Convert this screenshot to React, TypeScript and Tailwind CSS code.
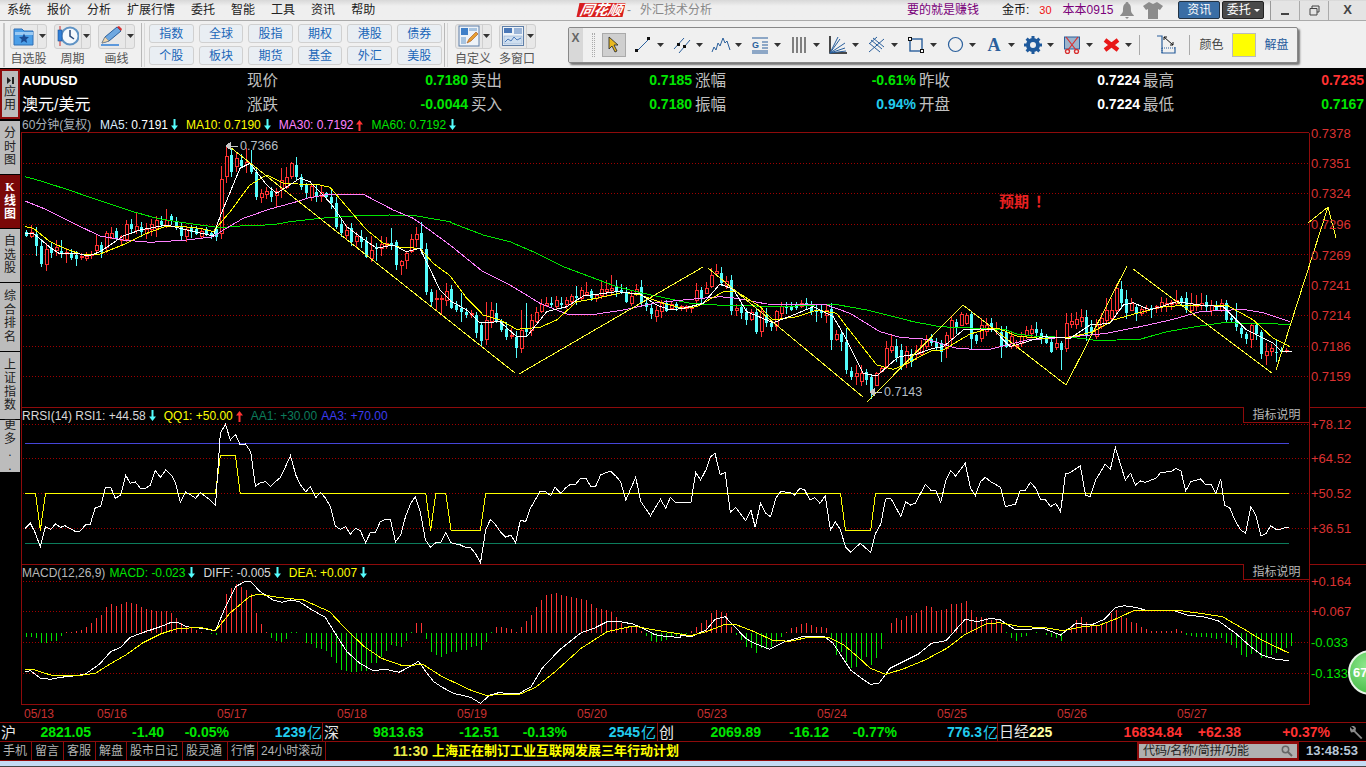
import type { ReactNode } from "react";

// chart data is traced off the screenshot, in 3x crop coordinates (y starts at 130 for the k-line pane)
const candleRows = `
c305,318 r308,318 c312,348,,378 c348,402 r358,402,,422 c355,370 r352,362,330 c362,370,330,385 r368,370,,400 c370,385
c376,386,,408 r380,383 r378,384 r372,376 r347,360,312,372 c345,367 r310,352 r310,325,292 c302,328,295 r320,332,,348
r283,328,270 c283,298,268 r290,300,250 c290,305,275 r297,310 r283,298 r270,296,258,320 c272,285 r270,285,238 c258,274,252
c272,288 c290,318 r298,320 c295,307 c297,312 r303,320 c297,312 c310,318 c298,320,285,332 r148,310,108,326
r78,140,47,158 c75,125 r85,108 c90,108 r98,104,55,130 c103,125,60 c125,200 r190,202,,218 r183,192,170 c183,200
r185,195,,230 r152,175,115,205 r142,172,110 r100,140,95 c105,140,82 c140,170,132 c165,190 r170,202,,212 c185,200 r188,198,165
c190,200,185 c200,220,,238 c218,290 c283,310 r300,315 c295,335 r320,335 c320,335,300 c332,380 r360,385,318,395
c350,358,340,392 r342,355,318,378 r340,345,322 c340,348,295 c335,405 r395,405,,435 r370,392,,418 r328,365,312 r312,328,,350 c310,358,275,372
c358,485 c485,515,478,530 r505,508,480,540 r505,508,495,552 r485,510,460 c478,535 c525,540 c535,545,488,575 c545,555 r550,553
c555,610 c585,632 r572,628,515 r540,575,515 c548,575,518 c572,600 c598,622 r615,618 c622,655,,683 r600,655,540
c598,605,520 r570,600 r548,575 r522,545 r520,525,502 c520,525,502 r510,528 c518,525,502 r512,522 r500,515
c498,505,468 r482,505,470 r488,492,456 c483,505 r495,505 r478,495 r478,485,450 r475,482,435 c468,482 c480,490
c487,515 r500,520 r478,490 c472,520,450 c520,530 c535,552 r540,560 r520,545 c518,542 r524,535
c522,535 r530,533 r530,535 r532,534 r480,510 c480,505,470 r475,490 r435,470,415 r425,430,402 c428,460
r455,465 c450,542 r535,542 c530,550,515 c545,570,,585 r548,568 c545,605 r545,605,,620 c555,580,535 c578,590
r545,590 r530,550,515 c530,535,515 c530,540,515 c525,535,515 r520,528,510 c520,527,505 c530,545 c540,545,,575 c540,550
r540,555,,580 c537,630,520,660 r612,628,600 c612,635,,662 c635,720,595,732 c722,740 r730,740,705,765 r730,755,705 c725,750 c742,790
r730,765 r715,725 r655,710 r650,660,612 c648,685
c660,708 r665,700 c675,695 r662,672 r645,672 r628,650 c628,640,612 c635,650 c640,665,,695 r615,655,,685
r570,625 c575,595 r552,585 r555,580 c552,628,,660 c615,632 r585,625 r585,605 c580,592,565 r595,598
c605,650,,685 c605,650 r620,650 r645,650 r620,640 r600,615 r598,610 c598,610,575 c608,625 c622,640
c635,665 r640,652,600 c640,660,,720 r580,655,548 r575,582,548 r568,582,545 r562,575,538 c560,615 c590,610 r585,620
r565,590,548 r540,570,505 r540,565,505 r475,540 c478,520,452 c508,548,480,568 r520,540,505 c532,550,,572 r538,550 r535,540,525
c533,538,,565 r530,535 r517,530,500 r520,528,505 r518,522,510 r510,520,480 c505,520,498 c505,540 r520,540,490 r525,530,495
r520,526,490 c515,530,495 r525,540 c525,540 r520,540,508 c520,570 c565,570,,575 c570,592,520 c595,612 c612,628
r585,628,,655 c585,612,578 c605,672,,688 r665,675,640,705 r655,665,642,678 c665,667,628,695 c662,665,650,672 r662,665,655,670`
  .trim()
  .split(/\s+/);

const candles = candleRows.map((row, i) => {
  const [top, bot, wt, wb] = row.slice(1).split(",").map((v) => (v === "" ? NaN : Number(v)));
  const wickTop = wt === undefined || Number.isNaN(wt) ? top - (4 + ((i * 37) % 19)) : wt;
  const wickBot = wb === undefined ? bot + (3 + ((i * 53) % 17)) : wb;
  return {
    x: Math.round(25.7 + 5 * i),
    up: row[0] === "r",
    top: 130 + top / 3,
    bot: 130 + bot / 3,
    wickTop: 130 + wickTop / 3,
    wickBot: 130 + wickBot / 3,
  };
});

const pts = (ox: number, sx: number, oy: number, arr: number[][]) =>
  arr.map(([x, y]) => `${(ox + x / sx).toFixed(1)},${(oy + y / 3).toFixed(1)}`).join(" ");
const main = (a: number[][], b: number[][], c: number[][]) =>
  `${pts(0, 3, 130, a)} ${pts(450, 3, 130, b)} ${pts(900, 3, 130, c)}`;

const ma60 = main(
  [[75,140],[120,152],[200,178],[300,212],[400,245],[470,265],[550,278],[660,293],[720,288],[820,284],[870,275],[960,265],[1060,258],[1170,255],[1250,258],[1350,275]],
  [[0,277],[100,315],[180,335],[260,370],[340,410],[420,440],[500,470],[580,490],[650,505],[720,520],[800,525],[1000,530],[1150,522],[1250,540],[1350,565]],
  [[0,565],[40,575],[120,590],[230,595],[320,600],[350,612],[400,618],[550,625],[590,632],[650,630],[720,628],[800,605],[900,588],[970,578],[1170,583]],
);
const ma30 = main(
  [[75,213],[130,235],[200,270],[300,318],[370,330],[450,337],[560,330],[640,320],[670,300],[730,265],[810,237],[890,215],[920,205],[985,193],[1090,193],[1180,240],[1240,265],[1350,345]],
  [[0,345],[95,422],[180,465],[270,520],[350,552],[440,552],[520,540],[620,518],[700,510],[810,500],[860,505],[950,522],[1130,525],[1200,550],[1290,605],[1350,622]],
  [[0,622],[80,628],[170,655],[260,660],[320,645],[380,630],[520,620],[620,610],[720,590],[820,568],[900,545],[1030,538],[1090,548],[1170,575]],
);
const ma10 = main(
  [[75,290],[100,295],[150,335],[200,358],[250,375],[300,372],[380,340],[440,310],[500,288],[530,288],[600,295],[640,305],[690,245],[750,165],[800,135],[850,160],[960,165],[990,172],[1040,230],[1100,300],[1150,340],[1200,352],[1260,355],[1300,400],[1350,437]],
  [[0,437],[50,505],[100,555],[150,570],[200,598],[270,592],[320,570],[380,515],[440,505],[520,487],[570,495],[640,520],[700,535],[740,530],[820,485],[860,485],[930,530],[970,570],[1040,560],[1100,540],[1160,550],[1190,590],[1280,705],[1330,718],[1350,710]],
  [[0,712],[50,685],[100,660],[130,660],[210,612],[270,595],[300,597],[350,618],[420,625],[510,622],[580,605],[640,570],[710,550],[780,532],[860,525],[980,525],[1060,570],[1120,625],[1170,650]],
);
const ma5 = main(
  [[75,310],[100,310],[150,352],[180,372],[230,370],[265,378],[300,365],[370,318],[420,300],[500,285],[540,295],[640,318],[660,260],[720,115],[750,100],[800,165],[830,190],[900,145],[930,155],[970,195],[1000,230],[1040,290],[1080,320],[1130,355],[1180,345],[1220,365],[1260,355],[1320,480],[1350,510]],
  [[0,512],[50,540],[90,578],[150,575],[200,620],[230,620],[290,545],[350,530],[400,498],[500,485],[570,492],[620,525],[660,540],[700,535],[760,520],[810,462],[850,478],[890,545],[970,578],[1030,555],[1090,530],[1150,560],[1190,630],[1240,730],[1280,738],[1340,685],[1350,680]],
  [[0,680],[50,672],[100,655],[130,650],[190,600],[240,597],[280,598],[330,650],[430,620],[510,625],[570,585],[630,580],[670,525],[700,518],[750,540],[830,515],[900,525],[970,530],[1040,600],[1120,640],[1145,665],[1175,665]],
);

// trend lines drawn by the user on the chart, real page coordinates
const trends = [
  [230,147,515,373], [519,374,703,267], [708,268,863,397], [867,402,963,305], [963,305,1066,385],
  [1066,385,1127,266], [1133,269,1272,373], [1276,370,1328,207], [1308,223,1328,207], [1328,207,1336,238],
];

const rsiWhite = `${pts(0, 2.306, 400, [[58,385],[70,370],[80,395],[93,440],[105,380],[117,388],[128,372],[140,382],[150,377],[172,393],[185,393],[197,375],[208,373],[220,322],[232,320],[243,262],[255,262],[266,295],[278,285],[290,226],[300,250],[312,246],[324,265],[336,265],[347,255],[358,211],[370,232],[382,210],[395,225],[405,250],[416,307],[428,276],[440,285],[451,295],[462,278],[485,300],[497,317],[508,100],[520,73],[531,120],[543,103],[554,135],[566,132],[578,155],[589,258],[601,248],[613,245],[624,260],[636,244],[647,232],[670,167],[682,225],[693,255],[705,275],[716,260],[728,293],[739,277],[751,295],[762,320],[773,378],[785,388],[797,380],[808,402],[820,385],[831,392],[843,428],[854,398],[866,397],[877,365],[889,358],[900,358],[912,425],[924,405],[935,350],[947,310],[958,290],[970,340],[981,420],[993,442],[1005,428],[1016,428],[1028,397],[1040,428],[1062,435],[1073,442],[1085,443],[1096,460],[1108,488],[1120,390],[1131,358],[1143,375],[1154,395],[1166,412],[1178,405],[1189,428],[1200,360],[1212,365],[1223,325],[1245,275],[1258,275],[1270,287],[1280,262],[1293,280],[1305,263],[1316,252],[1328,252],[1339,235],[1351,235],[1362,258],[1374,258],[1385,225],[1397,218],[1408,214],[1420,228],[1431,245],[1443,300],[1466,232],[1478,305],[1500,347],[1523,298],[1535,325],[1546,292],[1558,308],[1568,308]])} ${pts(680, 2.286, 400, [[0,308],[25,308],[36,217],[47,240],[60,208],[70,170],[80,160],[92,224],[103,217],[115,337],[127,322],[150,362],[162,330],[172,382],[184,310],[196,340],[207,350],[219,295],[230,275],[250,277],[262,285],[274,265],[285,270],[297,300],[308,293],[320,310],[332,288],[344,390],[355,365],[367,390],[378,440],[390,457],[412,430],[436,457],[447,400],[459,372],[470,297],[482,295],[505,350],[516,305],[527,315],[538,310],[561,253],[573,270],[584,270],[596,307],[608,240],[619,212],[630,228],[652,190],[664,265],[675,287],[687,245],[698,232],[710,245],[733,262],[744,320],[767,312],[778,270],[790,270],[801,247],[813,265],[824,297],[836,300],[847,320],[859,310],[870,335],[881,222],[892,218],[915,197],[927,285],[938,290],[950,240],[972,193],[984,208],[995,142],[1018,240],[1030,220],[1041,255],[1053,243],[1064,247],[1088,235],[1099,217],[1122,215],[1134,205],[1145,213],[1156,272],[1168,245],[1190,237],[1202,254],[1214,254],[1225,280],[1236,238],[1245,315],[1257,325],[1270,365],[1282,390],[1293,400],[1305,320],[1316,345],[1328,408],[1340,400],[1350,377],[1362,388],[1373,388],[1385,382],[1393,383]])}`;

const rsiYellow = `${pts(0, 2.306, 400, [[58,280],[82,280],[93,392],[105,280],[497,280],[508,167],[543,167],[554,280],[982,280],[993,392],[1005,280],[1028,280],[1040,390],[1108,390],[1120,280],[1568,280]])} ${pts(680, 2.286, 400, [[0,280],[367,280],[378,390],[436,390],[447,280],[1393,280]])}`;

const macdWhite = `${pts(0, 2.306, 400, [[58,815],[70,812],[93,834],[117,838],[140,832],[175,827],[197,822],[230,792],[255,755],[278,742],[300,712],[335,695],[370,680],[395,667],[410,667],[430,680],[465,685],[497,692],[520,620],[543,560],[566,544],[578,545],[600,575],[630,600],[650,607],[670,600],[690,605],[720,630],[750,652],[773,700],[800,755],[830,790],[860,812],[890,808],[920,817],[945,800],[965,784],[985,820],[1000,845],[1020,862],[1045,880],[1085,892],[1108,910],[1130,885],[1150,878],[1195,882],[1225,860],[1250,805],[1290,750],[1340,698],[1370,685],[1400,665],[1430,665],[1460,672],[1490,690],[1510,704],[1540,710],[1568,712]])} ${pts(680, 2.286, 400, [[0,705],[25,710],[60,690],[80,658],[103,650],[125,680],[150,715],[170,730],[205,748],[240,725],[285,708],[330,710],[350,730],[370,770],[390,810],[415,835],[435,853],[455,850],[480,805],[510,785],[545,762],[575,730],[608,722],[630,690],[652,658],[680,665],[710,655],[733,660],[765,688],[795,688],[830,685],[870,705],[905,670],[940,675],[970,658],[995,623],[1015,617],[1040,622],[1070,632],[1130,632],[1160,645],[1195,650],[1230,662],[1270,700],[1300,735],[1330,765],[1360,777],[1393,782]])}`;

const macdYellow = `${pts(0, 2.306, 400, [[58,808],[75,808],[117,825],[175,828],[220,820],[250,795],[290,765],[330,728],[370,702],[410,685],[465,683],[497,692],[530,640],[575,590],[595,582],[640,592],[700,600],[760,635],[800,690],[840,740],[880,775],[930,798],[975,793],[1020,830],[1085,870],[1120,886],[1200,882],[1235,862],[1280,815],[1340,745],[1400,695],[1460,678],[1510,690],[1568,702]])} ${pts(680, 2.286, 400, [[0,702],[25,707],[60,695],[105,672],[130,675],[170,695],[210,720],[250,724],[290,713],[340,712],[375,735],[410,775],[435,805],[470,823],[510,807],[560,780],[610,745],[650,705],[700,672],[730,668],[780,680],[830,682],[875,692],[920,680],[960,675],[1000,655],[1035,633],[1090,632],[1145,632],[1200,642],[1240,650],[1290,688],[1330,720],[1393,760]])}`;

// macd histogram, crop y of the bar tip per candle; zero line sits at crop y 697
const macdBars = [
  712,712,715,730,728,724,722,708,696,695,693,690,680,670,655,645,622,612,618,612,606,610,612,622,628,630,632,632,634,640,655,670,680,684,690,695,700,703,705,660,
  582,565,552,560,570,582,640,672,695,715,722,725,718,697,697,700,730,733,745,748,753,770,790,810,812,817,815,812,812,790,790,770,752,735,738,740,722,697,670,670,
  718,755,765,770,762,755,757,750,750,740,737,750,725,697,680,682,684,688,695,680,664,645,620,600,585,582,580,585,588,590,595,597,600,612,625,627,630,637,650,668,
  680,680,682,694,708,722,725,722,720,710,708,708,702,692,680,670,660,640,630,635,640,680,705,720,742,745,760,745,745,742,725,710,695,685,682,672,670,675,680,682,
  685,715,765,755,785,805,800,780,770,795,775,748,700,670,655,660,648,645,640,630,618,620,632,630,627,612,612,610,602,630,650,652,655,660,660,670,697,715,722,712,
  708,700,697,700,705,712,715,722,700,680,660,650,665,675,675,672,665,640,630,650,655,665,670,680,688,692,692,692,692,692,688,692,705,708,710,712,712,715,717,715,
  730,735,745,765,770,762,760,775,775,765,760,750,745,738,
];

const RED = "#8e0b0b";

function GridLines({ ys }: { ys: number[] }) {
  return (
    <>
      {ys.map((y) => (
        <line key={y} x1={23} x2={1309} y1={y} y2={y} stroke="#a00000" strokeDasharray="1 2" />
      ))}
    </>
  );
}

function AxisLabels({ items }: { items: [string, number, string?][] }) {
  return (
    <>
      {items.map(([t, y, fill]) => (
        <text key={t} x={1311} y={y} fontSize={13} fill={fill ?? "#dc3232"} dominantBaseline="central">
          {t}
        </text>
      ))}
    </>
  );
}

function PaneFrame({ top, bottom, full }: { top: number; bottom: number; full?: boolean }) {
  return (
    <>
      <line x1={21} x2={full ? 1366 : 1309} y1={top} y2={top} stroke={RED} />
      <line x1={21.5} x2={21.5} y1={top} y2={bottom} stroke={RED} />
      <line x1={1309.5} x2={1309.5} y1={top} y2={bottom} stroke={RED} />
    </>
  );
}

function KlinePane() {
  return (
    <svg width={1345} height={275} viewBox="21 132 1345 275" className="block overflow-visible" shapeRendering="crispEdges">
      <PaneFrame top={132.5} bottom={407} />
      <GridLines ys={[163.5, 193.5, 224.5, 254.5, 285.5, 315.5, 346.5, 376.5]} />
      {candles.map((c) => (
        <g key={c.x}>
          <line x1={c.x + 0.5} x2={c.x + 0.5} y1={c.wickTop} y2={c.wickBot} stroke={c.up ? "#ff3232" : "#54fcfc"} />
          <rect
            x={c.x - 1}
            y={c.top}
            width={3}
            height={Math.max(1, c.bot - c.top)}
            fill={c.up ? "#000" : "#54fcfc"}
            stroke={c.up ? "#ff3232" : "#54fcfc"}
            strokeWidth={c.up ? 1 : 0}
          />
        </g>
      ))}
      <polyline points={ma60} fill="none" stroke="#00e600" />
      <polyline points={ma30} fill="none" stroke="#ff80ff" />
      <polyline points={ma10} fill="none" stroke="#ffff00" />
      <polyline points={ma5} fill="none" stroke="#ffffff" />
      {trends.map(([x1, y1, x2, y2]) => (
        <line key={`${x1}-${y1}`} x1={x1} y1={y1} x2={x2} y2={y2} stroke="#ffff33" />
      ))}
      <path d="M226 146l4-3v6zM229 146h9" fill="#c8c8c8" stroke="#c8c8c8" />
      <text x={240} y={146} fontSize={12.5} fill="#b4bcc4" dominantBaseline="central">0.7366</text>
      <path d="M870 392l4-3v6zM873 392h9" fill="#c8c8c8" stroke="#c8c8c8" />
      <text x={884} y={392} fontSize={12.5} fill="#b4bcc4" dominantBaseline="central">0.7143</text>
      <text x={999} y={201} fontSize={15} fontWeight={700} fill="#e82020" dominantBaseline="central">
        预期<tspan dx={6}>！</tspan>
      </text>
      <AxisLabels items={[["0.7378",133],["0.7351",163],["0.7324",193],["0.7296",224],["0.7269",255],["0.7241",285],["0.7214",315],["0.7186",346],["0.7159",376]]} />
    </svg>
  );
}

function IndicatorNote() {
  return (
    <div className="absolute right-[57px] top-0 flex h-[16px] w-[66px] items-center justify-center border-b border-l border-[#8e0b0b] bg-black text-[12px] text-[#b8b8b8]">
      指标说明
    </div>
  );
}

function RsiPane() {
  return (
    <div className="relative h-[157px]">
      <svg width={1345} height={157} viewBox="21 407 1345 157" className="block" shapeRendering="crispEdges">
        <PaneFrame top={407.5} bottom={564} full />
        <GridLines ys={[424.5, 458.5, 493.5, 528.5]} />
        <line x1={25} x2={1289} y1={443.5} y2={443.5} stroke="#4646d8" />
        <line x1={25} x2={1289} y1={543.5} y2={543.5} stroke="#0c7c5c" />
        <polyline points={rsiYellow} fill="none" stroke="#ffff00" />
        <polyline points={rsiWhite} fill="none" stroke="#ffffff" />
        <AxisLabels items={[["+78.12",424],["+64.52",458],["+50.52",493],["+36.51",528]]} />
      </svg>
      <IndicatorNote />
      <div className="absolute left-[1px] top-[2px] flex items-center text-[12px] leading-[14px]">
        <span className="text-[#d8d8d8]">RRSI(14) RSI1: +44.58</span>
        <ArrowMark up={false} className="ml-[3px]" />
        <span className="ml-[8px] text-[#ffff00]">QQ1: +50.00</span>
        <ArrowMark up className="ml-[3px]" />
        <span className="ml-[8px] text-[#0c7c5c]">AA1: +30.00</span>
        <span className="ml-[4px] text-[#3c3cf0]">AA3: +70.00</span>
      </div>
    </div>
  );
}

function MacdPane() {
  return (
    <div className="relative h-[141px]">
      <svg width={1345} height={141} viewBox="21 564 1345 141" className="block" shapeRendering="crispEdges">
        <PaneFrame top={564.5} bottom={705} full />
        <line x1={21} x2={1309} y1={704.5} y2={704.5} stroke={RED} />
        <GridLines ys={[581.5, 611.5, 642.5, 673.5]} />
        {macdBars.map((tip, i) => {
          const x = Math.round(25.7 + 5 * i) + 0.5;
          const y = 400 + tip / 3;
          return <line key={i} x1={x} x2={x} y1={y} y2={632.5} stroke={tip < 697 ? "#ff3232" : "#00e600"} />;
        })}
        <polyline points={macdWhite} fill="none" stroke="#ffffff" />
        <polyline points={macdYellow} fill="none" stroke="#ffff00" />
        <AxisLabels items={[["+0.164",581],["+0.067",611],["-0.033",642,"#00e600"],["-0.133",673,"#00e600"]]} />
      </svg>
      <IndicatorNote />
      <div className="absolute left-[1px] top-[2px] flex items-center text-[12px] leading-[14px]">
        <span className="text-[#b8b8b8]">MACD(12,26,9)</span>
        <span className="ml-[4px] text-[#00e600]">MACD: -0.023</span>
        <ArrowMark up={false} className="ml-[3px]" />
        <span className="ml-[8px] text-[#d8d8d8]">DIFF: -0.005</span>
        <ArrowMark up={false} className="ml-[3px]" />
        <span className="ml-[8px] text-[#ffff00]">DEA: +0.007</span>
        <ArrowMark up={false} className="ml-[3px]" />
      </div>
      <div className="absolute left-[1327px] top-[86px] flex h-[45px] w-[45px] items-center rounded-full border-2 border-[#e8f5e8] bg-[radial-gradient(circle_at_40%_35%,#8ee88e,#35b035)] pl-[3px] text-[13px] font-bold text-white">
        67
      </div>
    </div>
  );
}

function ArrowMark({ up, className }: { up: boolean; className?: string }) {
  return (
    <svg width={7} height={12} viewBox="0 0 7 12" className={className}>
      {up ? (
        <path d="M3.5 1L7 5.5H4.5V12h-2V5.5H0z" fill="#ff3232" />
      ) : (
        <path d="M3.5 11L0 6.5h2.5V0h2v6.5H7z" fill="#54fcfc" />
      )}
    </svg>
  );
}

function Caret({ className }: { className?: string }) {
  return (
    <svg width={7} height={4} viewBox="0 0 7 4" className={className}>
      <path d="M0 0h7L3.5 4z" fill="#333" />
    </svg>
  );
}

function FolderIcon() {
  return (
    <svg width={22} height={20} viewBox="0 0 22 20">
      <path d="M1 3h8l2 2h9v14H1z" fill="#4c9fe8" stroke="#2f6fb5" />
      <path d="M2 6h18v3H2z" fill="#9ccaf2" />
      <path d="M11 7.5l1.5 3.3 3.5.3-2.7 2.3.9 3.5-3.2-1.9-3.2 1.9.9-3.5L6 11.1l3.5-.3z" fill="#1c4c94" />
    </svg>
  );
}

function ClockIcon() {
  return (
    <svg width={22} height={22} viewBox="0 0 22 22">
      <circle cx={13} cy={11} r={8.5} fill="#f4f8fc" stroke="#5f93c4" strokeWidth={2} />
      <path d="M13 5v6l4 3" fill="none" stroke="#2a4a78" strokeWidth={1.5} />
      <path d="M3 1v20" stroke="#d03030" />
      <rect x={1} y={5} width={4} height={11} fill="#2f7fd8" stroke="#1d4f90" strokeWidth={0.6} />
    </svg>
  );
}

function PencilIcon() {
  return (
    <svg width={24} height={22} viewBox="0 0 24 22">
      <path d="M2 18l3-6L17 2l4 4L9 16z" fill="#6fa8e0" stroke="#2a5f9c" />
      <path d="M17 2l4 4 1-2-3-3z" fill="#d83030" />
      <path d="M2 18l3-6 4 4z" fill="#f0d8b0" stroke="#777" strokeWidth={0.5} />
      <path d="M1 20h18" stroke="#2f7fd8" strokeWidth={1.5} />
    </svg>
  );
}

function SheetPenIcon() {
  return (
    <svg width={22} height={22} viewBox="0 0 22 22">
      <rect x={1} y={1} width={20} height={20} fill="#eef3f8" stroke="#5f7fa8" />
      <rect x={3} y={3} width={7} height={7} fill="#3f7fc8" />
      <rect x={11} y={3} width={8} height={3} fill="#a8c4e0" />
      <rect x={3} y={12} width={5} height={7} fill="#a8c4e0" />
      <path d="M9 18l2-4 7-7 2 2-7 7z" fill="#e8a030" stroke="#a05020" strokeWidth={0.6} />
    </svg>
  );
}

function PanelsIcon() {
  return (
    <svg width={22} height={20} viewBox="0 0 22 20">
      <rect x={0.5} y={0.5} width={21} height={19} fill="#eef3f8" stroke="#5f7fa8" />
      <rect x={2} y={2} width={8} height={5} fill="#4a78b8" />
      <path d="M12 3h8M12 5h8M12 7h8" stroke="#4a78b8" />
      <rect x={2} y={10} width={18} height={8} fill="#cfdff0" stroke="#7f9fc8" strokeWidth={0.5} />
      <path d="M3 16l3-3 3 2 3-4 3 3 4-2" fill="none" stroke="#4a78b8" />
    </svg>
  );
}

function SplitButton({ label, icon }: { label: string; icon: ReactNode }) {
  return (
    <div className="flex w-[37px] flex-col items-center">
      <div className="flex h-[25px] w-[37px] rounded-[3px] border border-[#cfcfcf] bg-[#e8e8e8]">
        <div className="flex w-[26px] items-center justify-center overflow-hidden">{icon}</div>
        <div className="flex flex-1 items-center justify-center border-l border-[#cfcfcf]">
          <Caret />
        </div>
      </div>
      <span className="mt-[3px] whitespace-nowrap text-[12px] leading-[14px] text-[#555]">{label}</span>
    </div>
  );
}

function Divider() {
  return (
    <div className="mx-[4px] flex h-[44px] w-[4px] items-end justify-between">
      <div className="h-full w-px bg-[#b8b8b8]" />
      <div className="h-full w-px bg-[#d8d8d8]" />
    </div>
  );
}

const quickRows = ["指数", "全球", "股指", "期权", "港股", "债券", "个股", "板块", "期货", "基金", "外汇", "美股"];

const tools: ReactNode[] = [
  <svg key="line" width={18} height={18} viewBox="0 0 18 18"><path d="M3 15L15 3" stroke="#2a5f9c" /><rect x={1} y={13} width={3} height={3} fill="#111" /><rect x={13} y={1} width={3} height={3} fill="#111" /></svg>,
  <svg key="dbl" width={18} height={18} viewBox="0 0 18 18"><path d="M1 13L11 2M6 17L17 4" stroke="#2a5f9c" /><rect x={4} y={7} width={3} height={3} fill="#111" /><rect x={10} y={9} width={3} height={3} fill="#111" /></svg>,
  <svg key="wave" width={20} height={18} viewBox="0 0 20 18"><path d="M1 16l2-5 2 3 2-7 2 3 3-8 2 5 2-2 3 9" fill="none" stroke="#2a5f9c" /></svg>,
  <svg key="ge" width={18} height={18} viewBox="0 0 18 18"><path d="M1 2h16M1 15h16M1 17h16" stroke="#2a5f9c" /><path d="M11 6h6M11 9h6M11 12h6" stroke="#2a5f9c" /><text x={1} y={12} fontSize={9} fontWeight={700} fill="#2a5f9c">G</text></svg>,
  <svg key="vert" width={16} height={18} viewBox="0 0 16 18"><path d="M2 1v16M6 1v16M10 1v16M14 1v16" stroke="#111" /></svg>,
  <svg key="fan" width={18} height={18} viewBox="0 0 18 18"><path d="M1 0v17h17" stroke="#111" strokeWidth={1.5} fill="none" /><path d="M1 17L9 1M1 17l10-14M1 17L16 7M1 17l15-5M1 17l16-2" stroke="#2a5f9c" /></svg>,
  <svg key="hatch" width={18} height={18} viewBox="0 0 18 18"><path d="M1 16L16 3M1 8l8-7M5 2l11 9M3 4l11 9M1 7l11 9" stroke="#2a5f9c" /></svg>,
  <svg key="rect" width={16} height={16} viewBox="0 0 16 16"><rect x={2} y={2} width={12} height={12} fill="none" stroke="#2a5f9c" strokeWidth={1.4} /><rect x={0.5} y={0.5} width={3} height={3} fill="#fff" stroke="#111" /><rect x={12.5} y={12.5} width={3} height={3} fill="#fff" stroke="#111" /></svg>,
  <svg key="circle" width={17} height={17} viewBox="0 0 17 17"><circle cx={8.5} cy={8.5} r={7} fill="none" stroke="#2a5f9c" strokeWidth={1.2} /></svg>,
  <span key="a" className="font-['Liberation_Serif',serif] text-[18px] font-bold leading-none text-[#2a5f9c]">A</span>,
  <svg key="gear" width={18} height={18} viewBox="0 0 18 18"><circle cx={9} cy={9} r={5} fill="none" stroke="#1f5a9c" strokeWidth={4} /><path d="M9 0v4M9 14v4M0 9h4M14 9h4M2.6 2.6l2.8 2.8M12.6 12.6l2.8 2.8M15.4 2.6l-2.8 2.8M5.4 12.6l-2.8 2.8" stroke="#1f5a9c" strokeWidth={3} /></svg>,
  <svg key="stamp" width={18} height={18} viewBox="0 0 18 18"><rect x={1.5} y={1} width={15} height={12} fill="#9cb4cc" stroke="#2a5f9c" /><path d="M3 1l10 13M15 1L5 14" stroke="#d83030" strokeWidth={1.2} /><circle cx={4.5} cy={15.5} r={2} fill="none" stroke="#d83030" strokeWidth={1.4} /><circle cx={13.5} cy={15.5} r={2} fill="none" stroke="#d83030" strokeWidth={1.4} /></svg>,
  <svg key="del" width={17} height={16} viewBox="0 0 17 16"><path d="M2 3l13 10M15 3L2 13" stroke="#e81818" strokeWidth={4.2} /></svg>,
];

function FloatBar() {
  return (
    <div className="ml-[32px] flex h-[36px] w-[730px] items-center rounded-[2px] border border-[#888] bg-[#f0f0f0] shadow-[2px_2px_2px_#777]">
      <div className="flex h-full w-[14px] items-start justify-center rounded-l-[2px] bg-[#d8d8d8] pt-[4px] text-[12px] font-bold leading-[12px] text-[#666]">X</div>
      <div className="ml-[9px] h-[24px] w-[3px] border-x border-dotted border-[#aaa]" />
      <div className="ml-[7px] flex h-[24px] w-[24px] items-center justify-center border border-[#aaa] bg-[#cfcfcf]">
        <svg width={14} height={17} viewBox="0 0 14 17">
          <path d="M2 1v12l3-3 3 6 2-1-3-6h4z" fill="#e8b820" stroke="#333" strokeWidth={0.9} />
        </svg>
      </div>
      <div className="ml-[7px] flex">
        {tools.map((t, i) => (
          <div key={i} className="flex w-[39px] items-center">
            <div className="flex w-[21px] items-center justify-center">{t}</div>
            <Caret className="ml-[3px]" />
          </div>
        ))}
      </div>
      <div className="ml-[-1px] h-[20px] w-px bg-[#aaa]" />
      <div className="ml-[16px] flex w-[20px] justify-center">
        <svg width={20} height={19} viewBox="0 0 20 19">
          <path d="M1 1h5v17h13v-6" fill="none" stroke="#2a5f9c" strokeWidth={1.2} />
          <path d="M6 13h13M6 13v5" stroke="#2a5f9c" strokeDasharray="1 1" fill="none" />
          <path d="M8 2l9 8M8 2h3M8 2v3M17 10h-3M17 10V7" stroke="#111" fill="none" />
        </svg>
      </div>
      <div className="ml-[13px] h-[20px] w-px bg-[#aaa]" />
      <span className="ml-[10px] text-[12px] text-[#444]">颜色</span>
      <div className="ml-[8px] h-[24px] w-[24px] border border-[#bbb] bg-[#ffff00]" />
      <span className="ml-[9px] text-[12px] text-[#1f5a9c]">解盘</span>
    </div>
  );
}

function Toolbar() {
  return (
    <div className="flex h-[48px] items-center border-t border-[#aaa] bg-[#f0f0f0] pl-[3px]">
      <div className="mr-[5px] h-[44px] w-[2px] bg-[#c8c8c8]" />
      <div className="flex w-[127px] gap-[7px]">
        <SplitButton label="自选股" icon={<FolderIcon />} />
        <SplitButton label="周期" icon={<ClockIcon />} />
        <SplitButton label="画线" icon={<PencilIcon />} />
      </div>
      <Divider />
      <div className="grid grid-cols-6 gap-x-[5px] gap-y-[3px]">
        {quickRows.map((q) => (
          <div key={q} className="flex h-[19px] w-[44.6px] items-center justify-center rounded-[3px] border border-[#d0d0d0] bg-[#e9eef3] text-[12px] text-[#1a66b8]">
            {q}
          </div>
        ))}
      </div>
      <div className="ml-[-2px]"><Divider /></div>
      <div className="ml-[3px] flex gap-[7px]">
        <SplitButton label="自定义" icon={<SheetPenIcon />} />
        <SplitButton label="多窗口" icon={<PanelsIcon />} />
      </div>
      <FloatBar />
    </div>
  );
}

const menus = ["系统", "报价", "分析", "扩展行情", "委托", "智能", "工具", "资讯", "帮助"];

function TitleBar() {
  return (
    <div className="flex h-[20px] items-center bg-linear-to-b from-[#d8d8d8] via-[#efefef] via-30% to-[#efefef] text-[12px]">
      <div className="ml-[7px] flex w-[571px] gap-[16px] text-[#222]">
        {menus.map((m) => (
          <span key={m}>{m}</span>
        ))}
      </div>
      <div className="-skew-x-12 bg-[#d81e1e] px-[2px] text-[14px] font-bold italic leading-[14px] text-white">同花顺</div>
      <span className="ml-[3px] text-[#888]">-</span>
      <span className="ml-[9px] w-[267px] text-[#888]">外汇技术分析</span>
      <span className="text-[#7a007a]">要的就是赚钱</span>
      <span className="ml-[23px] text-[#111]">金币:</span>
      <span className="ml-[10px] text-[11px] text-[#ee1111]">30</span>
      <span className="ml-[11px] text-[#7a007a]">本本0915</span>
      <svg width={14} height={17} viewBox="0 0 14 17" className="ml-[7px]">
        <path d="M7 0c1 0 1.5.6 1.5 1.4C11 2.5 11 6 11 9c0 2 3 4 3 5H0c0-1 3-3 3-5 0-3 0-6.500 2.500-7.600C5.500.6 6 0 7 0zM5 15h4l-2 2z" fill="#8c8c8c" />
      </svg>
      <svg width={20} height={17} viewBox="0 0 20 17" className="ml-[9px]">
        <path d="M6 0l4 2 4-2 6 4-3 4-2-1v10H5V7L3 8 0 4z" fill="#8c8c8c" />
      </svg>
      <div className="ml-[15px] flex h-[18px] w-[42px] items-center justify-center rounded-[2px] border border-[#234] bg-[#3a6ea5] text-white">资讯</div>
      <div className="ml-[2px] flex h-[18px] w-[42px] items-center justify-center gap-[3px] rounded-[2px] border border-[#222] bg-[#4a4a4a] text-white">
        委托
        <svg width={6} height={3} viewBox="0 0 6 3"><path d="M0 0h6L3 3z" fill="#fff" /></svg>
      </div>
      <div className="ml-[6px] flex h-[19px] flex-1 border-l border-[#999] bg-[#e4e4e4]">
        <div className="flex w-[29px] items-end justify-center border-r border-[#aaa] pb-[5px]"><div className="h-[2px] w-[8px] bg-[#444]" /></div>
        <div className="flex w-[29px] items-center justify-center border-r border-[#aaa]">
          <svg width={11} height={11} viewBox="0 0 11 11"><path d="M3 3V1h7v6H8M1 3.500h7v6.500H1z" fill="none" stroke="#444" /></svg>
        </div>
        <div className="flex flex-1 items-center justify-center text-[13px] font-bold text-[#444]">X</div>
      </div>
    </div>
  );
}

function SideTab({ text, h, active, mt, first }: { text: string; h: number; active?: boolean; mt?: boolean; first?: boolean }) {
  return (
    <div
      className={`flex w-[20px] flex-col items-center justify-center text-[12px] leading-[13.5px] ${
        active ? "bg-[#7a0808] font-['Liberation_Serif','Noto_Sans_CJK_SC',serif] font-bold text-white" : "bg-[#bcbcbc] text-[#222]"
      } ${mt ? "mt-[1px]" : ""} ${first ? "border-2 border-[#8e0b0b]" : ""}`}
      style={{ height: h }}
    >
      {first && (
        <svg width={9} height={9} viewBox="0 0 9 9" className="mb-[1px]">
          <path d="M1 1l4 3.500L1 8zM6 1h2v7H6z" fill="#222" />
        </svg>
      )}
      {[...text].map((c, i) => (
        <span key={i}>{c}</span>
      ))}
    </div>
  );
}

function SideTabs() {
  return (
    <div className="flex w-[21px] shrink-0 flex-col pt-[1px]">
      <SideTab text="应用" h={50} first />
      <div className="h-[2px]" />
      <SideTab text="分时图" h={53} />
      <SideTab text="K线图" h={53} active mt />
      <SideTab text="自选股" h={53} mt />
      <SideTab text="综合排名" h={68} mt />
      <SideTab text="上证指数" h={67} mt />
      <SideTab text="更多.." h={52} mt />
    </div>
  );
}

function QuoteCell({ label, value, cls }: { label: string; value: string; cls: string }) {
  return (
    <div className="flex items-center justify-between pr-[3px]">
      <span className="text-[15.5px] leading-[24px] text-[#c0c0c0]">{label}</span>
      <span className={`text-[14px] font-bold ${cls}`}>{value}</span>
    </div>
  );
}

const GREEN = "text-[#00e600]";
const WHITE = "text-white";

function QuoteBoard() {
  return (
    <div className="grid h-[49px] grid-cols-[226px_repeat(5,224px)] content-center">
      <span className="pl-[1px] text-[13px] font-bold leading-[24px] text-white">AUDUSD</span>
      <QuoteCell label="现价" value="0.7180" cls={GREEN} />
      <QuoteCell label="卖出" value="0.7185" cls={GREEN} />
      <QuoteCell label="涨幅" value="-0.61%" cls={GREEN} />
      <QuoteCell label="昨收" value="0.7224" cls={WHITE} />
      <QuoteCell label="最高" value="0.7235" cls="text-[#ff3232]" />
      <span className="pl-[1px] text-[16px] leading-[24px] text-white">澳元/美元</span>
      <QuoteCell label="涨跌" value="-0.0044" cls={GREEN} />
      <QuoteCell label="买入" value="0.7180" cls={GREEN} />
      <QuoteCell label="振幅" value="0.94%" cls="text-[#22ccee]" />
      <QuoteCell label="开盘" value="0.7224" cls={WHITE} />
      <QuoteCell label="最低" value="0.7167" cls={GREEN} />
    </div>
  );
}

function MaLegend() {
  return (
    <div className="flex h-[15px] items-center pl-[1px] text-[12px] leading-[14px]">
      <span className="w-[78px] text-[#a8b0b8]">60分钟(复权)</span>
      <span className="text-[#d8ecff]">MA5: <span className="text-white">0.7191</span></span>
      <ArrowMark up={false} className="ml-[3px]" />
      <span className="ml-[8px] text-[#ffff00]">MA10: 0.7190</span>
      <ArrowMark up={false} className="ml-[3px]" />
      <span className="ml-[8px] text-[#ff80ff]">MA30: 0.7192</span>
      <ArrowMark up className="ml-[3px]" />
      <span className="ml-[8px] text-[#00e600]">MA60: 0.7192</span>
      <ArrowMark up={false} className="ml-[3px]" />
    </div>
  );
}

const dates: [string, number][] = [
  ["05/13", 73], ["05/16", 120], ["05/17", 120], ["05/18", 120], ["05/19", 120], ["05/20", 120],
  ["05/23", 120], ["05/24", 120], ["05/25", 120], ["05/26", 120], ["05/27", 120],
];

function DateAxis() {
  return (
    <div className="flex h-[17px] items-center pl-[3px] text-[12px] leading-[14px] text-[#c83030]">
      {dates.map(([d, w]) => (
        <span key={d} className="shrink-0" style={{ width: w }}>{d}</span>
      ))}
    </div>
  );
}

function TickerSection({ label, widths, vals, width, last }: { label: ReactNode; widths: number[]; vals: [string, string][]; width: number; last?: boolean }) {
  return (
    <div className={`flex h-full items-center ${last ? "" : "border-r border-[#8e0b0b]"}`} style={{ width }}>
      <div className="shrink-0 pl-[1px] text-[15px] leading-[19px] text-[#e8e8e8]" style={{ width: widths[0] }}>{label}</div>
      {vals.map(([v, cls], i) => (
        <span key={v} className={`shrink-0 text-right text-[14px] font-bold leading-[19px] ${cls}`} style={{ width: widths[i + 1] }}>{v}</span>
      ))}
      {!last && <span className="ml-px text-[15px] leading-[19px] text-[#22ccee]">亿</span>}
      {last && (
        <svg width={13} height={13} viewBox="0 0 13 13" className="ml-[20px]">
          <path d="M1 0L4 0 6 2 5.500 5l7 7-1.500 1-7-7-3 .5L0 4l0-3 2.500 2.500L4 2.500z" fill="#8a8a8a" />
        </svg>
      )}
    </div>
  );
}

function Ticker() {
  return (
    <div className="flex h-[20px] items-stretch border-y border-[#8e0b0b]">
      <TickerSection label="沪" width={323} widths={[40, 51, 73, 65, 77]} vals={[["2821.05", GREEN], ["-1.40", GREEN], ["-0.05%", GREEN], ["1239", "text-[#22ccee]"]]} />
      <TickerSection label="深" width={335} widths={[50, 50, 76, 68, 73]} vals={[["9813.63", GREEN], ["-12.51", GREEN], ["-0.13%", GREEN], ["2545", "text-[#22ccee]"]]} />
      <TickerSection label="创" width={340} widths={[51, 52, 68, 68, 85]} vals={[["2069.89", GREEN], ["-16.12", GREEN], ["-0.77%", GREEN], ["776.3", "text-[#22ccee]"]]} />
      <TickerSection
        last
        label={<>日经<span className="text-[14px] font-bold text-[#ffffa0]">225</span></>}
        width={368}
        widths={[64, 120, 59, 89]}
        vals={[["16834.84", "text-[#ff3232]"], ["+62.38", "text-[#ff3232]"], ["+0.37%", "text-[#ff3232]"]]}
      />
    </div>
  );
}

const bottomTabs: [string, number][] = [["手机", 32], ["留言", 32], ["客服", 32], ["解盘", 31], ["股市日记", 56], ["股灵通", 45], ["行情", 30], ["24小时滚动", 68]];

function BottomBar() {
  return (
    <div className="flex h-[19px] items-center border-b border-[#8e0b0b] text-[12px] leading-[18px]">
      {bottomTabs.map(([t, w]) => (
        <div key={t} className="h-full shrink-0 border-r border-[#8e0b0b] pl-[3px] text-[#b4b4b4]" style={{ width: w }}>{t}</div>
      ))}
      <div className="ml-[67px] flex w-[400px] items-center font-bold text-[#ffff00]">
        <span className="text-[14px] text-[#e8e84a]">11:30</span>
        <span className="ml-[4px] text-[13px]">上海正在制订工业互联网发展三年行动计划</span>
      </div>
      <div className="ml-[344px] flex h-full w-[162px] items-center justify-between border-2 border-[#8e0b0b] bg-[#b0b0b0] px-[4px] text-[#222]">
        <span>代码/名称/简拼/功能</span>
        <svg width={12} height={12} viewBox="0 0 12 12"><circle cx={4.500} cy={4.500} r={3.200} fill="none" stroke="#666" strokeWidth={1.500} /><path d="M7 7l4 4" stroke="#666" strokeWidth={2} /></svg>
      </div>
      <span className="ml-[7px] text-[13px] font-bold text-[#b8c8d8]">13:48:53</span>
    </div>
  );
}

export default function App() {
  return (
    <div className="relative flex h-[767px] w-[1366px] flex-col overflow-hidden bg-black font-['Liberation_Sans','Noto_Sans_CJK_SC',sans-serif]">
      <TitleBar />
      <Toolbar />
      <div className="flex h-[654px] shrink-0">
        <SideTabs />
        <div className="flex min-w-0 flex-1 flex-col">
          <QuoteBoard />
          <MaLegend />
          <KlinePane />
          <RsiPane />
          <MacdPane />
          <DateAxis />
        </div>
      </div>
      <Ticker />
      <BottomBar />
      <div className="h-[5px] bg-[#c4dcf4]" />
      <div className="h-px bg-[#444]" />
    </div>
  );
}
